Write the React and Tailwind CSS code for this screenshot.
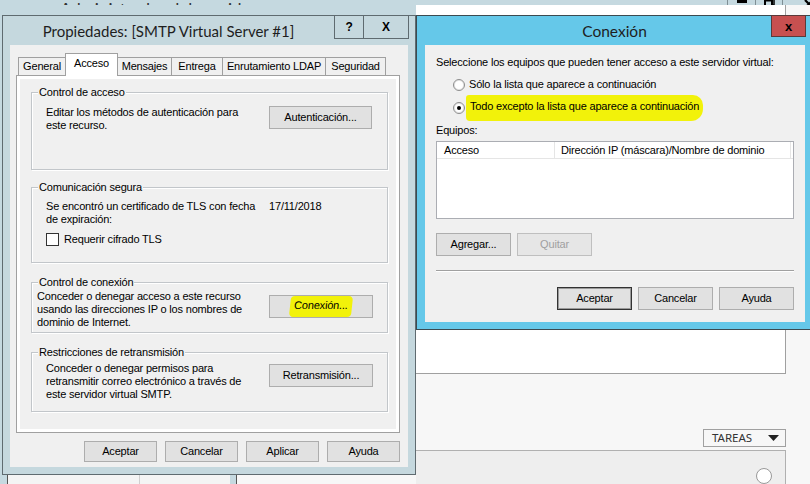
import React from 'react';

const ui = "font-['Liberation_Sans',Arial,sans-serif] text-[11px] leading-[13px] tracking-[-0.18px] text-black";

function Btn({ children, className = '', disabled = false, primary = false }) {
  const tone = disabled
    ? 'bg-[#e6e6e6] border-[#bfbfbf] text-[#a0a0a0]'
    : primary
    ? 'bg-[#e1e1e1] border-[#333] shadow-[inset_0_0_0_1px_#9a9a9a] text-black'
    : 'bg-[#e1e1e1] border-[#adadad] text-black';
  return (
    <div className={`flex items-center justify-center border ${tone} ${className}`}>
      {children}
    </div>
  );
}

function Group({ title, className = '', children }) {
  return (
    <div className={`relative border border-[#c2c6ca] shadow-[inset_1px_1px_0_#fff,1px_1px_0_#fff] ${className}`}>
      <span className="absolute left-[6px] -top-[7px] bg-[#f0f0f0] px-[1px]">{title}</span>
      {children}
    </div>
  );
}

function Tab({ label, width, active }) {
  return active ? (
    <div
      className={`${width} h-[23px] -mb-px relative z-10 bg-white border border-b-0 border-[#a0a0a0] -ml-px flex justify-center pt-[3px]`}
    >
      {label}
    </div>
  ) : (
    <div className={`${width} h-[18px] bg-[#f0f0f0] border border-b-0 border-[#a0a0a0] -ml-px flex justify-center pt-[2px]`}>
      {label}
    </div>
  );
}

function Radio({ checked }) {
  return (
    <div className="w-[12px] h-[12px] rounded-full border border-[#8c8c8c] bg-white flex items-center justify-center shadow-[inset_0_0_0_1px_#e4e4e4]">
      {checked && <div className="w-[4px] h-[4px] rounded-full bg-black" />}
    </div>
  );
}

function PropertiesDialog() {
  return (
    <div className={`absolute left-[2px] top-[15px] w-[414px] h-[460px] border border-[#5f6b70] bg-[#c5d8de] flex flex-col ${ui}`}>
      <div className="h-[29px] flex">
        <div className="flex-1 flex items-center justify-center font-['Lato',sans-serif] text-[15px] tracking-normal text-[#1e1e1e] pt-[2px]">
          Propiedades: [SMTP Virtual Server #1]
        </div>
        <div className="flex h-[24px] mr-[6px] -mt-px border border-[#5f6b70] font-['Liberation_Sans',Arial,sans-serif] font-bold text-[12px]">
          <div className="w-[29px] border-r border-[#5f6b70] flex items-center justify-center">?</div>
          <div className="w-[44px] flex items-center justify-center">X</div>
        </div>
      </div>

      <div className="mx-[7px] h-[422px] bg-[#f0f0f0] flex flex-col">
        <div className="h-[22px] mt-[8px] ml-[9px] flex items-end">
          <Tab label="General" width="w-[48px]" />
          <Tab label="Acceso" width="w-[53px]" active />
          <Tab label="Mensajes" width="w-[55px]" />
          <Tab label="Entrega" width="w-[52px]" />
          <Tab label="Enrutamiento LDAP" width="w-[104px]" />
          <Tab label="Seguridad" width="w-[61px]" />
        </div>

        <div className="ml-[6px] mr-[8px] h-[358px] border border-[#a0a0a0] bg-white p-[3px]">
          <div className="h-full bg-[#f0f0f0] pl-[11px] pr-[8px] pt-[13px] flex flex-col">
            <Group title="Control de acceso" className="h-[78px] pl-[14px] pr-[15px] pt-[13px]">
              <div className="flex justify-between">
                <div className="whitespace-nowrap">
                  Editar los métodos de autenticación para
                  <br />
                  este recurso.
                </div>
                <Btn className="w-[103px] h-[23px]">Autenticación...</Btn>
              </div>
            </Group>

            <Group title="Comunicación segura" className="h-[76px] mt-[17px] pl-[14px] pt-[12px]">
              <div className="flex">
                <div className="w-[223px] whitespace-nowrap">
                  Se encontró un certificado de TLS con fecha
                  <br />
                  de expiración:
                </div>
                <div>17/11/2018</div>
              </div>
              <div className="flex items-center mt-[7px] gap-[5px]">
                <div className="w-[13px] h-[13px] border border-[#333] bg-white" />
                <span>Requerir cifrado TLS</span>
              </div>
            </Group>

            <Group title="Control de conexión" className="h-[51px] mt-[19px] pl-[5px] pr-[14px] pt-[7px]">
              <div className="flex justify-between">
                <div className="whitespace-nowrap">
                  Conceder o denegar acceso a este recurso
                  <br />
                  usando las direcciones IP o los nombres de
                  <br />
                  dominio de Internet.
                </div>
                <Btn className="w-[104px] h-[23px] mt-[5px]">
                  <span className="bg-[#f2f20a] px-[4px] pt-[3px] pb-[5px] rounded-[4px] -skew-x-6">Conexión...</span>
                </Btn>
              </div>
            </Group>

            <Group title="Restricciones de retransmisión" className="h-[60px] mt-[19px] pl-[14px] pr-[14px] pt-[9px]">
              <div className="flex justify-between">
                <div className="whitespace-nowrap">
                  Conceder o denegar permisos para
                  <br />
                  retransmitir correo electrónico a través de
                  <br />
                  este servidor virtual SMTP.
                </div>
                <Btn className="w-[104px] h-[23px] mt-[2px]">Retransmisión...</Btn>
              </div>
            </Group>
          </div>
        </div>

        <div className="flex justify-end gap-[8px] mr-[8px] mt-[8px]">
          <Btn className="w-[73px] h-[21px]">Aceptar</Btn>
          <Btn className="w-[73px] h-[21px]">Cancelar</Btn>
          <Btn className="w-[73px] h-[21px]">Aplicar</Btn>
          <Btn className="w-[73px] h-[21px]">Ayuda</Btn>
        </div>
      </div>
    </div>
  );
}

function ConnectionDialog() {
  return (
    <div className={`absolute left-[416px] top-[15px] w-[397px] h-[315px] border border-[#3b4a50] bg-[#65c8e9] flex flex-col ${ui}`}>
      <div className="h-[29px] relative flex items-center justify-center font-['Lato',sans-serif] text-[15.5px] tracking-normal text-[#1e1e1e] pt-[2px]">
        Conexión
        <div className="absolute right-[6px] -top-px w-[35px] h-[22px] bg-[#c75050] border border-[#5a3a3a] flex items-center justify-center font-['Liberation_Sans',Arial,sans-serif] font-bold text-[13px] text-black">
          x
        </div>
      </div>
      <div className="ml-[8px] mr-[7px] h-[277px] bg-[#f0f0f0] pl-[11px] pr-[11px] pt-[11px] flex flex-col">
        <div>Seleccione los equipos que pueden tener acceso a este servidor virtual:</div>
        <div className="flex items-center gap-[4px] ml-[17px] mt-[9px] h-[13px]">
          <Radio />
          <span>Sólo la lista que aparece a continuación</span>
        </div>
        <div className="flex items-center gap-[4px] ml-[17px] mt-[10px] h-[13px]">
          <Radio checked />
          <span className="bg-[#f2f20a] px-[4px] -mx-[3px] pt-[5px] pb-[8px] rounded-tl-[3px] rounded-tr-[10px] rounded-br-[12px] rounded-bl-[4px]">
            Todo excepto la lista que aparece a continuación
          </span>
        </div>
        <div className="mt-[10px]">Equipos:</div>
        <div className="mt-[4px] h-[78px] border border-[#abadb3] bg-white">
          <div className="flex h-[17px] border-b border-[#e5e5e5]">
            <div className="w-[118px] pl-[7px] border-r border-[#e5e5e5] flex items-center">Acceso</div>
            <div className="flex-1 pl-[6px] border-r border-[#e5e5e5] mr-[2px] flex items-center">
              Dirección IP (máscara)/Nombre de dominio
            </div>
          </div>
        </div>
        <div className="flex gap-[6px] mt-[14px]">
          <Btn className="w-[75px] h-[23px]">Agregar...</Btn>
          <Btn className="w-[75px] h-[23px]" disabled>Quitar</Btn>
        </div>
        <div className="mt-[14px] border-t border-[#a0a0a0] border-b border-b-white" />
        <div className="flex justify-end gap-[6px] mt-[15px]">
          <Btn className="w-[75px] h-[23px]" primary>Aceptar</Btn>
          <Btn className="w-[75px] h-[23px]">Cancelar</Btn>
          <Btn className="w-[75px] h-[23px]">Ayuda</Btn>
        </div>
      </div>
    </div>
  );
}

export default function App() {
  return (
    <div className="relative w-[810px] h-[484px] overflow-hidden bg-[#f7f7f7] flex flex-col">
      {/* server manager title bar (behind the dialogs) */}
      <div className="h-[15px] bg-[#c5d9e0] flex overflow-hidden">
        <div className="ml-[60px] mt-[1px] font-['Lato',sans-serif] text-[17px] leading-[17px] text-[#333] whitespace-nowrap">
          Administrador del servidor
        </div>
        <div className="ml-auto flex h-full">
          <div className="w-[28px] border-l border-[#7f8f95] flex items-end justify-center pb-[2px]">
            <div className="w-[10px] h-[3px] bg-black" />
          </div>
          <div className="w-[27px] border-l border-[#7f8f95] flex items-center justify-center">
            <svg width="11" height="11" viewBox="0 0 11 11">
              <rect x="3" y="1" width="7" height="7" fill="none" stroke="#000" strokeWidth="1.5" />
              <rect x="1" y="3.5" width="7" height="7" fill="#c5d9e0" stroke="#000" strokeWidth="2" />
            </svg>
          </div>
          <div className="w-[28px] border-l border-[#7f8f95] flex items-center justify-end">
            <svg width="10" height="10" viewBox="0 0 10 10" className="-mr-[4px] mt-[3px]">
              <path d="M1 1 L9 9 M9 1 L1 9" stroke="#000" strokeWidth="2.2" />
            </svg>
          </div>
        </div>
      </div>

      <div className="flex-1 flex">
        <div className="w-[416px] bg-[#c5d9e0] flex flex-col justify-end">
          <div className="h-[9px] flex">
            <div className="w-[8px] border-r border-[#555]" />
            <div className="w-[132px] bg-[#f4f4f4] border-r border-[#cfcfcf]" />
            <div className="w-[90px] bg-[#f4f4f4]" />
            <div className="w-[7px] border-r border-[#555]" />
            <div className="flex-1 bg-[#f7f7f7]" />
          </div>
        </div>
        <div className="flex-1 flex flex-col bg-[#f7f7f7]">
          <div className="w-[370px] h-[369px] bg-white border-r border-b border-[#a0a0a0]" />
          <div className="w-[370px] flex justify-end mt-[55px]">
            <div className="w-[83px] h-[18px] border border-[#a0a0a0] flex items-center pl-[8px] pr-[6px] font-['Noto_Sans',sans-serif] text-[11.5px] text-[#333]">
              <span>TAREAS</span>
              <svg width="11" height="6" viewBox="0 0 11 6" className="ml-auto">
                <polygon points="0,0 11,0 5.5,6" fill="#222" />
              </svg>
            </div>
          </div>
          <div className="w-[370px] flex-1 mt-[3px] bg-[#eeeeee] border-t border-r border-[#b0b0b0] flex justify-end pr-[13px] pt-[17px]">
            <div className="w-[16px] h-[16px] rounded-full border border-[#999] bg-white" />
          </div>
        </div>
      </div>

      <PropertiesDialog />
      <ConnectionDialog />
    </div>
  );
}
